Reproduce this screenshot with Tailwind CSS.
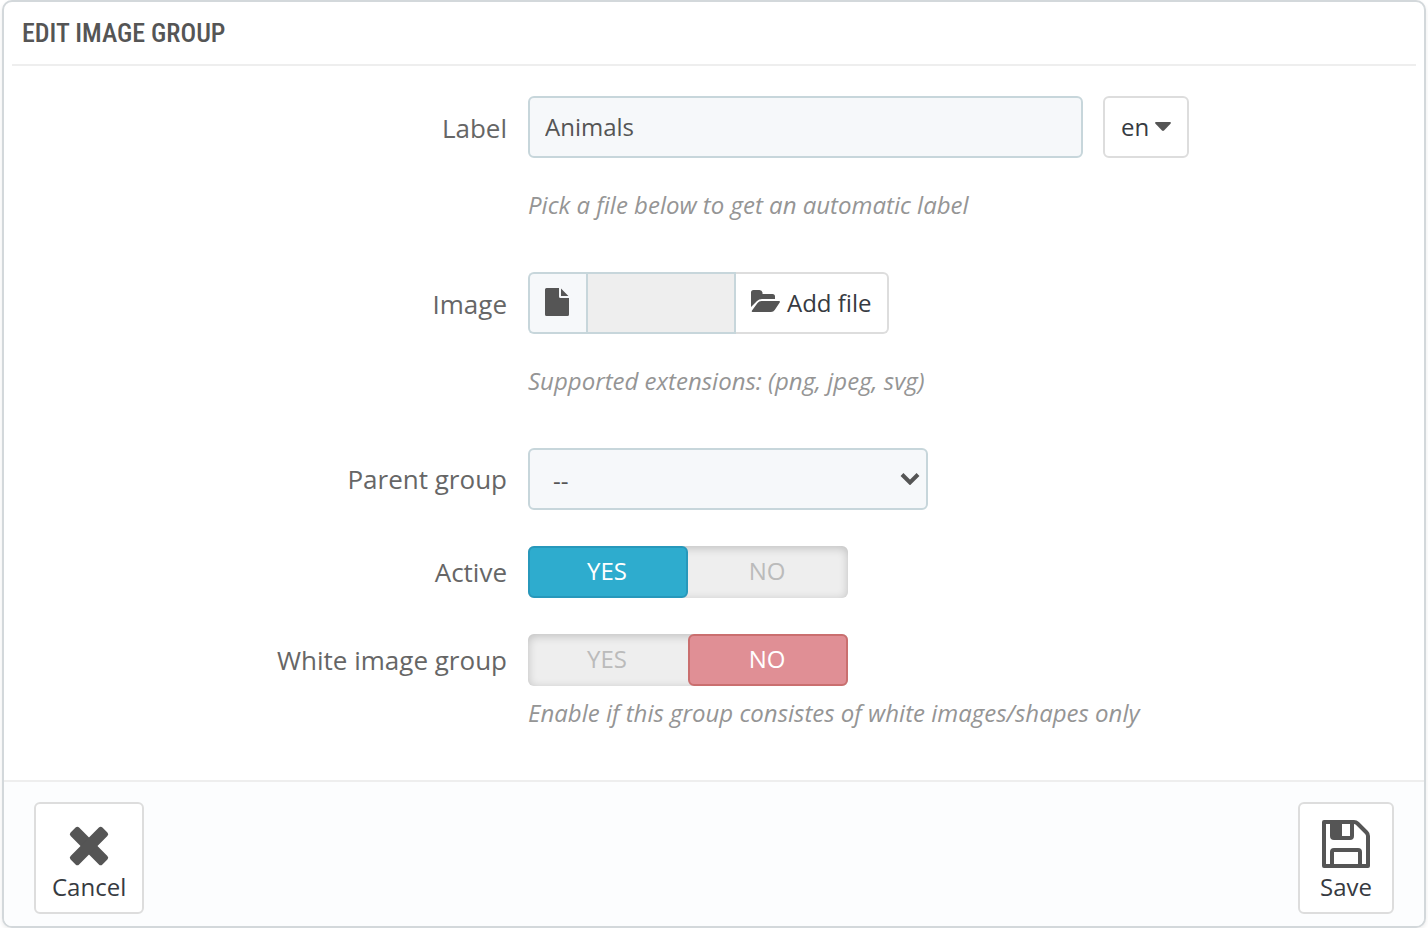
<!DOCTYPE html>
<html lang="en">
<head>
  <meta charset="UTF-8" />
  <meta name="viewport" content="width=device-width, initial-scale=1.0" />
  <title>Edit image group</title>
  <script src="https://cdn.jsdelivr.net/npm/@tailwindcss/browser@4"></script>
</head>
<body class="bg-white px-0.5 font-['Open_Sans','Noto_Sans',sans-serif] text-[24px] text-[#555]">

  <form class="overflow-hidden rounded-[10px] border-2 border-[#d3d8db] bg-white shadow-[0_2px_4px_rgba(0,0,0,0.08)]">

    <!-- Panel heading -->
    <div class="px-2">
      <h1 class="border-b-2 border-[#eee] px-2.5 pt-1.5 pb-1.5 font-['Ubuntu_Condensed','Roboto_Condensed','Open_Sans_Condensed',sans-serif] text-[26px] leading-[50px] font-medium uppercase">Edit image group</h1>
    </div>

    <!-- Fields -->
    <div class="flex flex-col gap-9 px-2 pt-[30px] pb-9">

      <div class="grid grid-cols-[62fr_111fr] gap-5">
        <label for="label" class="pr-px text-right text-[26px] leading-[64px] text-[#666]">Label</label>
        <div>
          <div class="flex gap-5">
            <input id="label" type="text" value="Animals" class="h-[62px] w-5/8 rounded-md border-2 border-[#c7d6db] bg-[#f6f8fa] px-[15px] pb-0.5 outline-none" />
            <button type="button" class="flex h-[62px] items-center gap-1.5 rounded-md border-2 border-[#ddd] bg-white px-4 text-[#363a41]">
              en
              <svg class="h-2.5 w-4" viewBox="0 0 16 10" fill="#555"><path d="M1 0h14q1.500 .5 .5 1.700L9 8.500q-1 .9-2 0L.5 1.700Q-.5 .5 1 0z"/></svg>
            </button>
          </div>
          <p class="mt-7 pb-3 leading-[38px] text-[#959595] italic">Pick a file below to get an automatic label</p>
        </div>
      </div>

      <div class="grid grid-cols-[62fr_111fr] gap-5">
        <label for="filename" class="pr-px text-right text-[26px] leading-[64px] text-[#666]">Image</label>
        <div>
          <div class="flex h-[62px]">
            <span class="flex w-[58px] items-center justify-center rounded-l-md border-2 border-r-0 border-[#c7d6db] bg-[#f6f8fa] pr-0.5 pb-0.5">
              <svg class="h-7 w-6" viewBox="0 0 24 28" fill="#555"><path d="M14 0v8.500q0 1.500 1.500 1.500H24v16.500q0 1.500-1.500 1.500h-21Q0 28 0 26.500v-25Q0 0 1.500 0zM16 0.600L23.400 8H16z"/></svg>
            </span>
            <input id="filename" type="text" readonly class="w-[150px] border-2 border-[#c7d6db] bg-[#eee] px-4 outline-none" />
            <button type="button" class="flex items-center gap-[7px] rounded-r-md border-2 border-l-0 border-[#ddd] bg-white px-4 text-[#363a41]">
              <svg class="-ml-px h-7 w-[29px] pb-1" viewBox="0 0 29 24" fill="#555"><path d="M0 18V3.500Q0 1 2.500 1h6Q11 1 11.500 3.500V5h10Q24 5 24 7.500V10H11Q8 10 6 12zM10.500 12H28q1.500.2.700 1.500l-5 7.500Q22.500 23 20 23H1.500Q.2 22.800 1 21.500l5.500-7.500Q8 12 10.500 12z"/></svg>
              Add file
            </button>
          </div>
          <p class="mt-7 pb-3 leading-[38px] text-[#959595] italic">Supported extensions: (png, jpeg, svg)</p>
        </div>
      </div>

      <div class="grid grid-cols-[62fr_111fr] gap-5">
        <label for="parent" class="pr-px text-right text-[26px] leading-[62px] text-[#666]">Parent group</label>
        <div class="relative w-[400px]">
          <select id="parent" class="block h-[62px] w-full appearance-none rounded-md border-2 border-[#c7d6db] bg-[#f6f8fa] px-[23px] pt-1 outline-none">
            <option>--</option>
          </select>
          <svg class="pointer-events-none absolute top-[25px] right-2 h-3 w-5" viewBox="0 0 20 12" fill="none" stroke="#555" stroke-width="4"><path d="M2 1.500l8 8 8-8"/></svg>
        </div>
      </div>

      <div role="radiogroup" aria-labelledby="active-label" class="grid grid-cols-[62fr_111fr] gap-5">
        <span id="active-label" class="pr-px text-right text-[26px] leading-[52px] text-[#666]">Active</span>
        <div class="flex h-[52px] w-[320px] rounded-md bg-[#eee] text-center leading-[46px] text-[#bbb] uppercase shadow-[inset_0_2px_10px_rgba(0,0,0,0.2)]">
          <label class="relative flex-1 rounded-md border-2 border-transparent pr-0.5 has-checked:border-[#2798bb] has-checked:bg-[#2eacce] has-checked:text-white">
            <input type="radio" name="active" value="1" checked class="sr-only" />Yes
          </label>
          <label class="relative flex-1 rounded-md border-2 border-transparent pr-0.5 has-checked:border-[#ca6f6f] has-checked:bg-[#e08f95] has-checked:text-white">
            <input type="radio" name="active" value="0" class="sr-only" />No
          </label>
        </div>
      </div>

      <div role="radiogroup" aria-labelledby="white-label" class="grid grid-cols-[62fr_111fr] gap-5">
        <span id="white-label" class="pr-px text-right text-[26px] leading-[52px] text-[#666]">White image group</span>
        <div>
          <div class="flex h-[52px] w-[320px] rounded-md bg-[#eee] text-center leading-[46px] text-[#bbb] uppercase shadow-[inset_0_2px_10px_rgba(0,0,0,0.2)]">
            <label class="relative flex-1 rounded-md border-2 border-transparent pr-0.5 has-checked:border-[#2798bb] has-checked:bg-[#2eacce] has-checked:text-white">
              <input type="radio" name="white" value="1" class="sr-only" />Yes
            </label>
            <label class="relative flex-1 rounded-md border-2 border-transparent pr-0.5 has-checked:border-[#ca6f6f] has-checked:bg-[#e08f95] has-checked:text-white">
              <input type="radio" name="white" value="0" checked class="sr-only" />No
            </label>
          </div>
          <p class="mt-2 pb-3 leading-[38px] text-[#959595] italic">Enable if this group consistes of white images/shapes only</p>
        </div>
      </div>
    </div>

    <!-- Footer -->
    <div class="flex justify-between border-t-2 border-[#eee] bg-[#fcfdfe] px-[30px] pt-5 pb-3">
      <button type="button" class="flex h-28 flex-col items-center rounded-md border-2 border-[#ddd] bg-white px-4 pt-3 text-[#363a41]">
        <svg class="h-[60px] w-[60px]" viewBox="0 0 60 60" fill="#555"><g transform="rotate(45 30 30)"><rect x="7.500" y="24" width="45" height="12" rx="2.500"/><rect x="24" y="7.500" width="12" height="45" rx="2.500"/></g></svg>
        <span class="leading-[22px]">Cancel</span>
      </button>
      <button type="submit" class="flex h-28 flex-col items-center rounded-md border-2 border-[#ddd] bg-white px-5 pt-3 text-[#363a41]">
        <svg class="h-[60px] w-12" viewBox="0 0 48 60" fill="none" stroke="#555" stroke-width="4" stroke-linejoin="round"><path d="M2 6h30q2 0 3.500 1.500l9 9Q46 18 46 20v30H2z"/><path d="M10 50V36q0-2 2-2h24q2 0 2 2v14M10 6v14q0 2 2 2h16q2 0 2-2V6"/><path d="M10 6h10v16H10z" fill="#555" stroke="none"/></svg>
        <span class="leading-[22px]">Save</span>
      </button>
    </div>
  </form>

</body>
</html>
